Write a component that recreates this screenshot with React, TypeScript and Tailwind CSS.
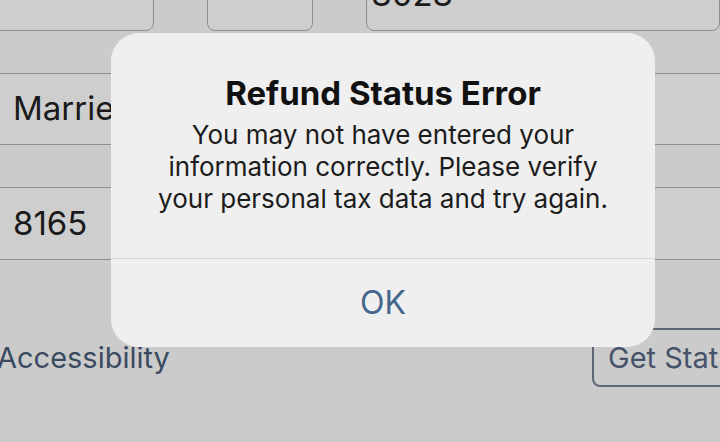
export default function App() {
  return (
    <div
      className="relative w-[720px] h-[442px] overflow-hidden bg-[#cbcbcb]"
      style={{ fontFamily: 'Inter, "Liberation Sans", sans-serif' }}
    >
      {/* dimmed form behind the alert */}
      <div className="flex flex-col">
        <div className="flex mt-[-41px] h-[72px]">
          <div className="ml-[-10px] w-[167px] rounded-lg border-[1.5px] border-[#8e8e8e] bg-[#cecece]" />
          <div className="ml-[53px] w-[108px] rounded-lg border-[1.5px] border-[#8e8e8e] bg-[#cecece]" />
          <div className="ml-[53px] w-[360px] rounded-lg border-[1.5px] border-[#8e8e8e] bg-[#cecece] flex items-center pl-[4px] text-[33px] text-[#1a1a1a]">
            8028
          </div>
        </div>

        <div className="mt-[42px] h-[72px] ml-[-10px] w-[740px] rounded-lg border-[1.5px] border-[#8e8e8e] bg-[#cecece] flex items-center pl-[22px] text-[33px] text-[#1a1a1a]">
          Married
        </div>

        <div className="mt-[42px] h-[73px] ml-[-10px] w-[740px] rounded-lg border-[1.5px] border-[#8e8e8e] bg-[#cecece] flex items-center pl-[22px] text-[33px] text-[#1a1a1a]">
          8165
        </div>

        <div className="mt-[68px] h-[59px] flex items-center justify-between">
          <span className="ml-[-3px] text-[29px] text-[#3a4a60]">Accessibility</span>
          <div className="mr-[-30px] w-[158px] h-[59px] rounded-lg border-2 border-[#5d6778] flex items-center pl-[14px] text-[29px] text-[#46536a] whitespace-nowrap overflow-hidden">
            Get Status
          </div>
        </div>
      </div>

      {/* alert */}
      <div className="absolute left-[111px] top-[33px] w-[544px] h-[314px] rounded-[28px] bg-[#efefef] flex flex-col text-center">
        <div className="h-[225px] pt-[41px]">
          <h1 className="text-[33px] leading-[39px] font-bold text-[#111]">Refund Status Error</h1>
          <p className="mt-[6px] text-[26px] leading-[32px] text-[#1c1c1c]">
            You may not have entered your
            <br />
            information correctly. Please verify
            <br />
            your personal tax data and try again.
          </p>
        </div>
        <div className="flex-1 border-t border-[#d4d4d4] flex items-center justify-center">
          <span className="text-[32px] text-[#45668c]">OK</span>
        </div>
      </div>
    </div>
  )
}
